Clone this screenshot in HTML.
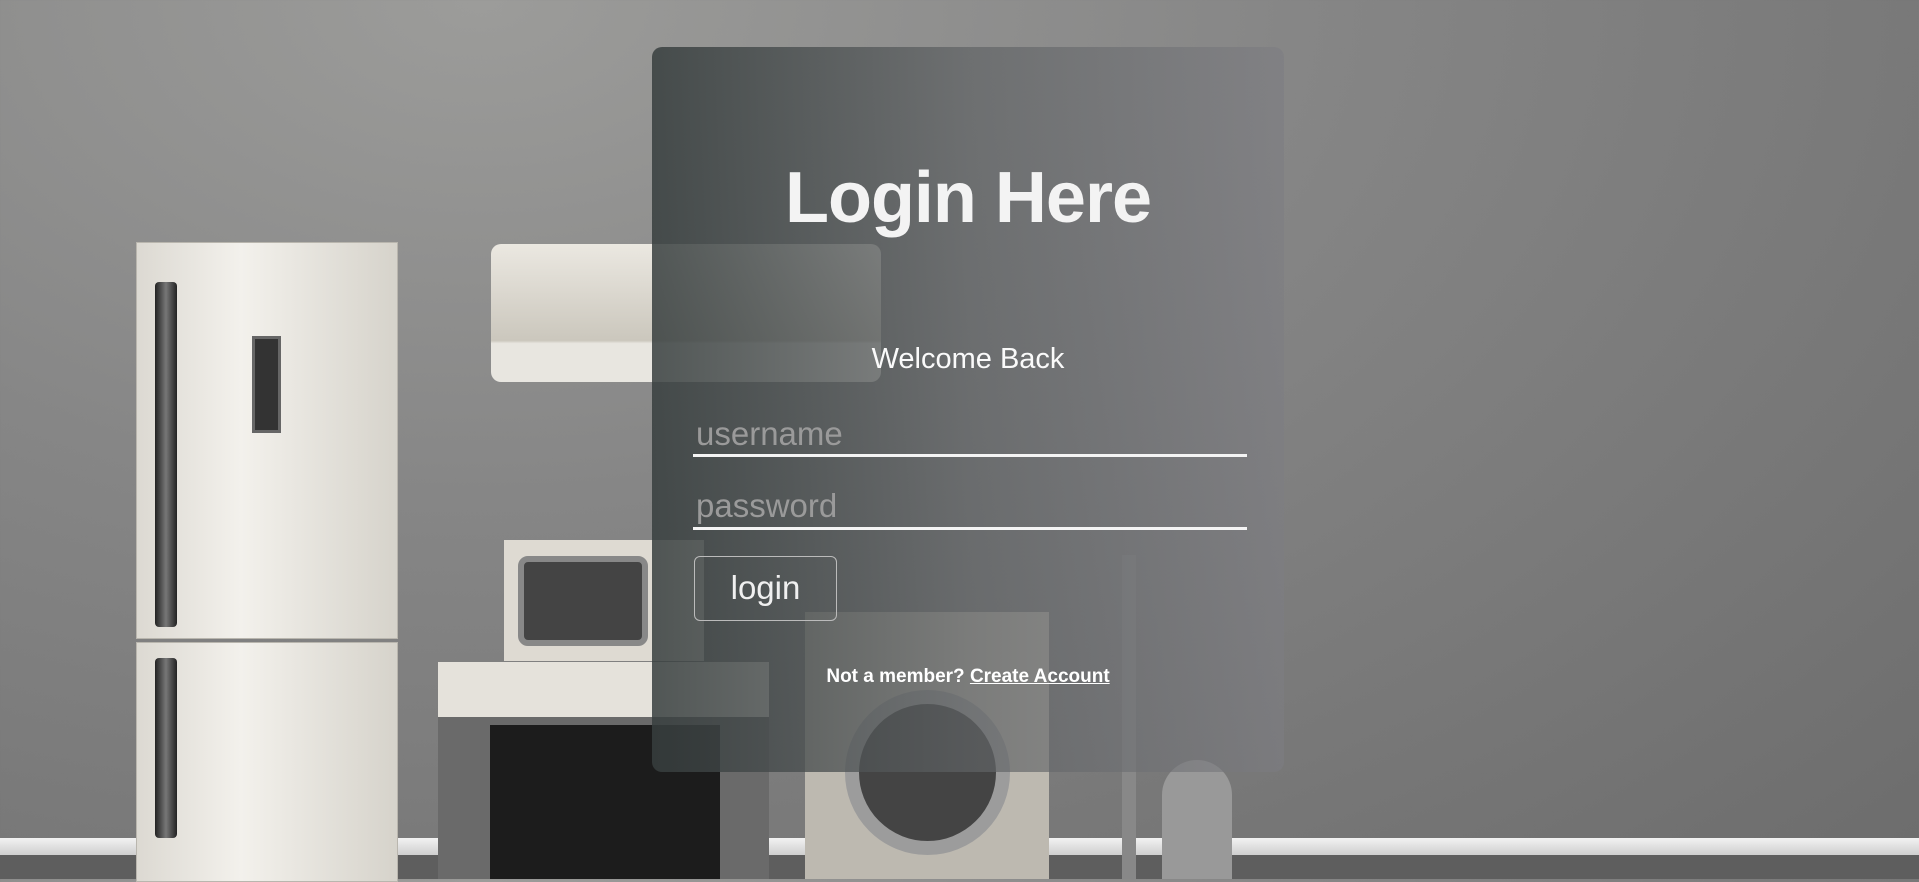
<!DOCTYPE html>
<html><head><meta charset="utf-8"><style>
*{margin:0;padding:0;box-sizing:border-box}
body{width:1919px;height:879px;overflow:hidden;position:relative;font-family:"Liberation Sans",sans-serif;
background:radial-gradient(ellipse at 25% 0%,#9c9c9a 0%,#868686 40%,#6c6c6c 100%);}
.a{position:absolute}
.card{left:652px;top:47px;width:632px;height:725px;border-radius:10px;
background:linear-gradient(90deg,rgba(55,62,62,.85) 0%,rgba(95,98,100,.7) 50%,rgba(125,125,130,.6) 100%);}
</style></head><body>
<div class="a" style="left:0;top:838px;width:1919px;height:17px;background:linear-gradient(#f2f2f2,#cfcfcf)"></div>
<div class="a" style="left:0;top:855px;width:1919px;height:24px;background:#5e5e5e"></div>
<div class="a" style="left:136px;top:242px;width:262px;height:397px;background:linear-gradient(90deg,#dcd9d2,#f3f1ec 40%,#d6d3cb);border:1px solid #b9b6ae"></div>
<div class="a" style="left:136px;top:642px;width:262px;height:240px;background:linear-gradient(90deg,#dcd9d2,#f3f1ec 40%,#d6d3cb);border:1px solid #b9b6ae"></div>
<div class="a" style="left:155px;top:282px;width:22px;height:345px;background:linear-gradient(90deg,#222,#777,#222);border-radius:4px"></div>
<div class="a" style="left:155px;top:658px;width:22px;height:180px;background:linear-gradient(90deg,#222,#777,#222);border-radius:4px"></div>
<div class="a" style="left:252px;top:336px;width:29px;height:97px;background:#333;border:3px solid #666"></div>
<div class="a" style="left:491px;top:244px;width:390px;height:138px;background:linear-gradient(#ebe8e1,#cbc7bd 70%,#e8e6e0 72%);border-radius:10px"></div>
<div class="a" style="left:504px;top:540px;width:200px;height:121px;background:#dedad2"></div>
<div class="a" style="left:518px;top:556px;width:130px;height:90px;background:#444;border:6px solid #888;border-radius:10px"></div>
<div class="a" style="left:438px;top:662px;width:331px;height:217px;background:linear-gradient(#e5e2db 0 55px,#6a6a6a 55px)"></div>
<div class="a" style="left:490px;top:725px;width:230px;height:154px;background:#1c1c1c"></div>
<div class="a" style="left:805px;top:612px;width:244px;height:267px;background:#bdb9b0"></div>
<div class="a" style="left:845px;top:690px;width:165px;height:165px;border-radius:50%;background:#444;border:14px solid #9c9c9c"></div>
<div class="a" style="left:1122px;top:555px;width:14px;height:324px;background:#888"></div>
<div class="a" style="left:1162px;top:760px;width:70px;height:119px;border-radius:35px 35px 0 0;background:#999"></div>

<div class="a card"></div>
<div class="a" style="left:652px;top:157px;width:632px;text-align:center;color:#f3f3f3;font-weight:bold;font-size:72px;letter-spacing:-1px">Login Here</div>
<div class="a" style="left:652px;top:343px;width:632px;text-align:center;color:#fafafa;font-size:29px">Welcome Back</div>
<div class="a" style="left:696px;top:415px;color:#9a9a9a;font-size:33px">username</div>
<div class="a" style="left:693px;top:454px;width:554px;height:3px;background:#f4f4f4"></div>
<div class="a" style="left:696px;top:487px;color:#9a9a9a;font-size:33px">password</div>
<div class="a" style="left:693px;top:527px;width:554px;height:3px;background:#f4f4f4"></div>
<div class="a" style="left:694px;top:556px;width:143px;height:65px;border:1.5px solid #bbb;border-radius:6px;color:#f0f0f0;font-size:33px;text-align:center;line-height:62px">login</div>
<div class="a" style="left:652px;top:666px;width:632px;text-align:center;color:#fff;font-weight:bold;font-size:19px">Not a member? <span style="text-decoration:underline">Create Account</span></div>
</body></html>
